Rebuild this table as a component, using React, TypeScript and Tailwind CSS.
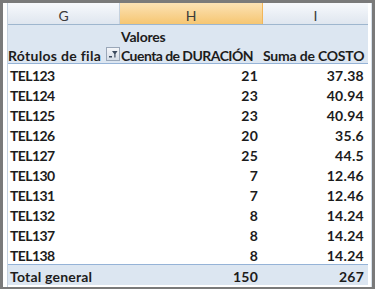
import React from "react";

const rows = [
  ["TEL123", "21", "37.38"],
  ["TEL124", "23", "40.94"],
  ["TEL125", "23", "40.94"],
  ["TEL126", "20", "35.6"],
  ["TEL127", "25", "44.5"],
  ["TEL130", "7", "12.46"],
  ["TEL131", "7", "12.46"],
  ["TEL132", "8", "14.24"],
  ["TEL137", "8", "14.24"],
  ["TEL138", "8", "14.24"],
];

const cols = "grid grid-cols-[112px_143px_105px]";

function FilterIcon() {
  return (
    <span className="ml-[5px] inline-flex h-[14px] w-[14px] items-center justify-center border border-[#9aa7b8] bg-gradient-to-b from-[#f4f6f9] to-[#d5dde7]">
      <svg width="10" height="10" viewBox="0 0 10 10">
        <path d="M4 2 L9.5 2 L7.5 5 L7.5 8.5 L6.3 8.5 L6.3 5 Z" fill="#3c4b5e" />
        <rect x="1" y="7" width="3" height="1.5" fill="#3c4b5e" />
      </svg>
    </span>
  );
}

export default function App() {
  return (
    <div className="h-[292px] w-[375px] bg-white" style={{ fontFamily: "Lato, 'Open Sans', sans-serif" }}>
      <div className="h-[289px] w-[375px] border-[3px] border-b-[2px] border-[#7a7a7a] bg-white pl-[4px]">
        <div className="flex h-full border-l border-[#c5d1de]">
          <div className="flex flex-col text-[14px] leading-[16px] text-[#1c1c1c]">
            <div className={`${cols} h-[22px] border-b border-[#9eb6ce] font-normal text-[#3b3b3b]`}>
              <div className="flex justify-center border-r border-[#c5d1de] bg-gradient-to-b from-[#f7f9fc] to-[#dfe6ef] pt-[5px]">G</div>
              <div className="flex justify-center border-r border-[#f2b65a] bg-gradient-to-b from-[#fbe2b4] to-[#f6c671] pt-[5px]">H</div>
              <div className="flex justify-center bg-gradient-to-b from-[#f7f9fc] to-[#dfe6ef] pt-[5px]">I</div>
            </div>
            <div className="bg-[#dce6f1] font-bold">
              <div className={`${cols} h-[19px] pt-[4px]`}>
                <div />
                <div className="pl-[1px] tracking-[-0.2px]">Valores</div>
                <div />
              </div>
              <div className={`${cols} h-[20px] border-b border-[#95b3d7]`}>
                <div className="flex items-start whitespace-nowrap pt-[3px]">
                  <span className="pt-[1px] tracking-[0.3px]">Rótulos de fila</span>
                  <FilterIcon />
                </div>
                <div className="whitespace-nowrap pl-[1px] pt-[4px] tracking-[-0.55px]">Cuenta de DURACIÓN</div>
                <div className="whitespace-nowrap pr-[4px] pt-[4px] text-right tracking-[-0.2px]">Suma de COSTO</div>
              </div>
            </div>
            {rows.map(([id, d, c]) => (
              <div key={id} className={`${cols} h-[20px] pt-[4px] font-bold`}>
                <div className="pl-[2px] tracking-[-0.6px]">{id}</div>
                <div className="pr-[5px] text-right tracking-[0.2px]">{d}</div>
                <div className="pr-[4px] text-right tracking-[0.3px]">{c}</div>
              </div>
            ))}
            <div className={`${cols} h-[21px] border-t border-[#95b3d7] bg-[#dce6f1] pt-[4px] font-bold`}>
              <div className="pl-[2px] tracking-[0.2px]">Total general</div>
              <div className="pr-[5px] text-right tracking-[0.2px]">150</div>
              <div className="pr-[4px] text-right tracking-[0.2px]">267</div>
            </div>
          </div>
          <div className="ml-[3px] w-[1px] bg-[#d6e0ea]" />
        </div>
      </div>
    </div>
  );
}
